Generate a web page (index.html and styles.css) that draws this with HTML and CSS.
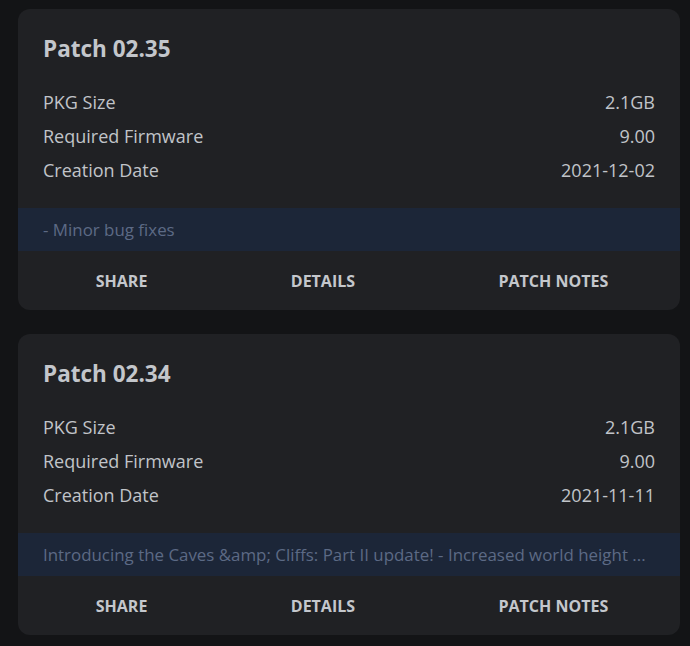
FILE: index.html
```html
<!DOCTYPE html>
<html lang="en">
<head>
<meta charset="utf-8">
<title>Patches</title>
<link rel="stylesheet" href="styles.css">
</head>
<body>
<main class="list">
  <section class="card">
    <div class="card-body">
      <h2 class="title">Patch 02.35</h2>
      <dl class="specs">
        <div class="row"><dt>PKG Size</dt><dd>2.1GB</dd></div>
        <div class="row"><dt>Required Firmware</dt><dd>9.00</dd></div>
        <div class="row"><dt>Creation Date</dt><dd>2021-12-02</dd></div>
      </dl>
    </div>
    <div class="notes">- Minor bug fixes</div>
    <div class="actions">
      <button class="btn">SHARE</button>
      <button class="btn">DETAILS</button>
      <button class="btn">PATCH NOTES</button>
    </div>
  </section>
  <section class="card">
    <div class="card-body">
      <h2 class="title">Patch 02.34</h2>
      <dl class="specs">
        <div class="row"><dt>PKG Size</dt><dd>2.1GB</dd></div>
        <div class="row"><dt>Required Firmware</dt><dd>9.00</dd></div>
        <div class="row"><dt>Creation Date</dt><dd>2021-11-11</dd></div>
      </dl>
    </div>
    <div class="notes">Introducing the Caves &amp;amp; Cliffs: Part II update! - Increased world height ...</div>
    <div class="actions">
      <button class="btn">SHARE</button>
      <button class="btn">DETAILS</button>
      <button class="btn">PATCH NOTES</button>
    </div>
  </section>
</main>
</body>
</html>
```
FILE: styles.css
```css
html, body {
  margin: 0;
  background: #131416;
}
body {
  font-family: "Open Sans", "Noto Sans", sans-serif;
  color: #c1c4c9;
}
.list {
  padding: 9px 10px 0 18px;
  display: flex;
  flex-direction: column;
  gap: 24px;
}
.card {
  background: #202124;
  border-radius: 12px;
  overflow: hidden;
}
.card-body {
  padding: 24px 25px 21px;
}
.title {
  margin: 0;
  font-size: 22.5px;
  line-height: 32px;
  font-weight: 700;
  color: #c3c6cb;
}
.specs {
  margin: 20px 0 0;
}
.row {
  display: flex;
  justify-content: space-between;
  font-size: 18px;
  line-height: 34px;
}
.row dt, .row dd {
  margin: 0;
}
.notes {
  background: #1c2638;
  color: #5c6a85;
  font-size: 16.9px;
  line-height: 23px;
  padding: 10px 25px;
  white-space: nowrap;
  overflow: hidden;
  text-overflow: ellipsis;
}
.actions {
  display: flex;
  justify-content: space-around;
  align-items: center;
  height: 59px;
  padding-left: 6px;
}
.btn {
  background: none;
  border: 0;
  padding: 0;
  font-family: inherit;
  font-size: 16px;
  font-weight: 700;
  color: #c4c7cc;
  cursor: pointer;
}
```
